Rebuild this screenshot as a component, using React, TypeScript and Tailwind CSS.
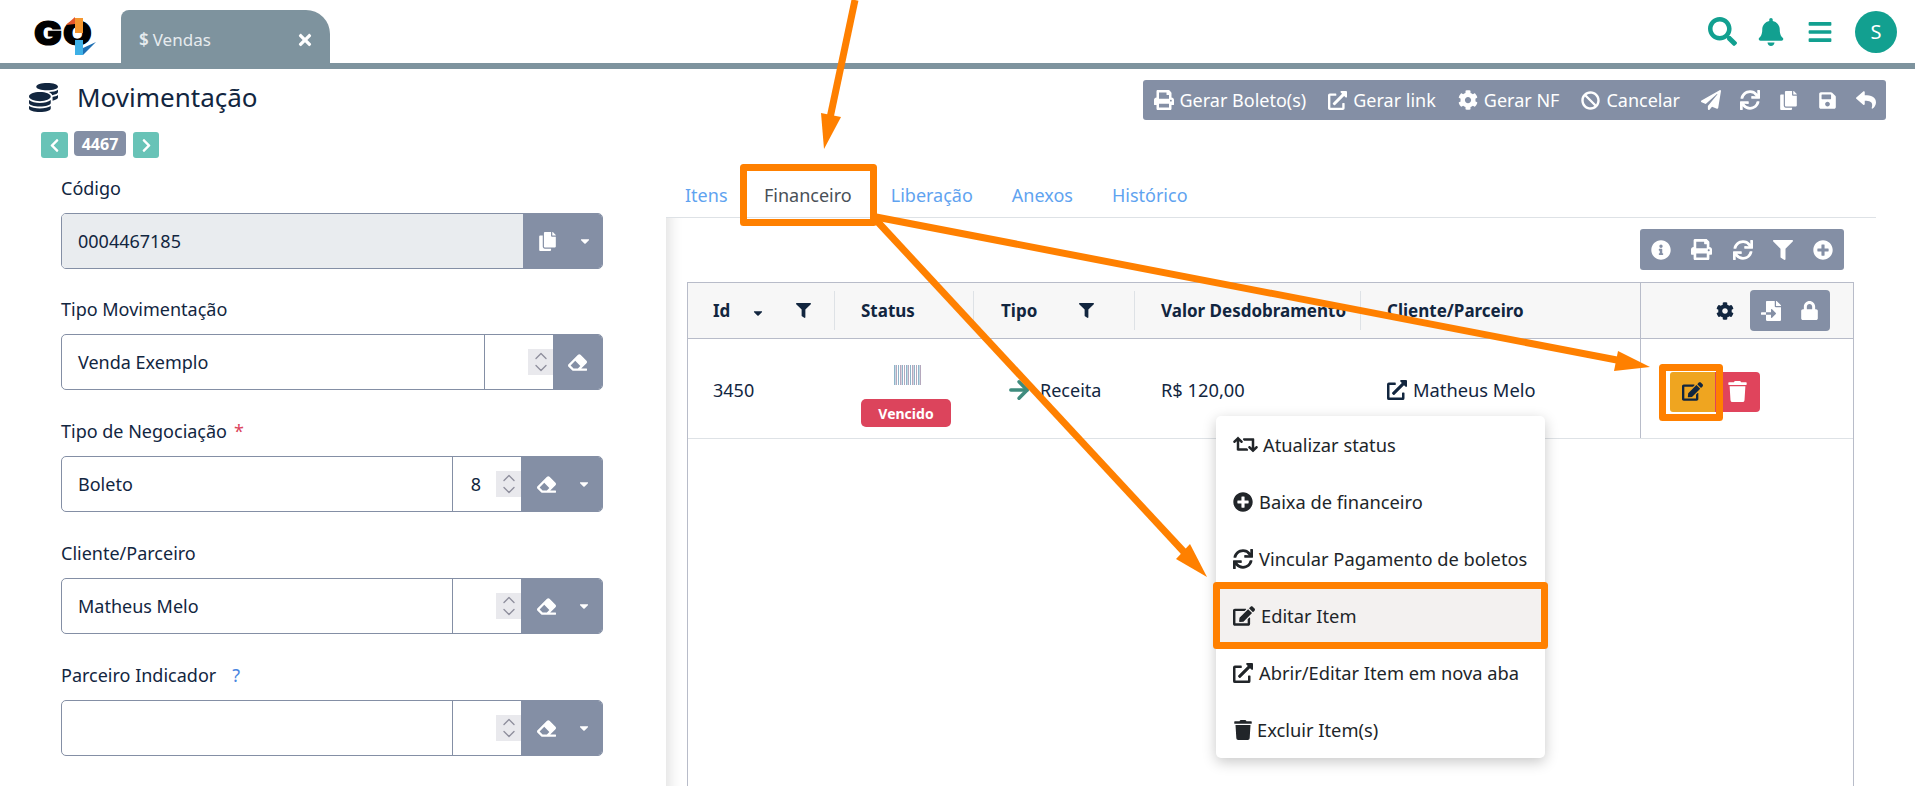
import React from "react";
import {
  FaBan,
  FaBars,
  FaBell,
  FaCaretDown,
  FaChevronLeft,
  FaChevronRight,
  FaCoins,
  FaCog,
  FaCopy,
  FaEdit,
  FaEraser,
  FaExternalLinkAlt,
  FaFileImport,
  FaFilter,
  FaInfoCircle,
  FaLock,
  FaPaperPlane,
  FaPlusCircle,
  FaPrint,
  FaReply,
  FaRetweet,
  FaSave,
  FaSearch,
  FaSync,
  FaTimes,
  FaTrash,
} from "react-icons/fa";
import { ArrowRight, ChevronDown, ChevronUp } from "lucide-react";

// Logo: real letters with the two arrows drawn over the O
function Logo() {
  return (
    <div className="relative ml-[34px] h-[63px] w-[87px] shrink-0">
      <span className="absolute left-0 top-[13px] origin-left scale-x-[1.12] font-['Inter',sans-serif] text-[33px] font-black leading-[40px] tracking-[1px] text-black [-webkit-text-stroke:1.2px_black]">
        GO
      </span>
      <svg className="absolute left-0 top-0" width="87" height="63" viewBox="0 0 87 63">
        <path d="M41 18h8v15h-8z" fill="#f5972f" />
        <path d="M41 17 32 25l9-1z" fill="#e4562a" />
        <path d="M41 40h8v15h-8z" fill="#3db0e6" />
        <path d="M49 55 62 42l-13 6z" fill="#1d6fb3" />
      </svg>
    </div>
  );
}

function Spinner() {
  return (
    <div className="flex h-[26px] w-[25px] flex-col items-center justify-center bg-[#e9e9ed] text-[#8f8f9d]">
      <ChevronUp size={20} strokeWidth={1.6} className="-my-[4px]" />
      <ChevronDown size={20} strokeWidth={1.6} className="-my-[4px]" />
    </div>
  );
}

interface FieldProps {
  label: React.ReactNode;
  value: string;
  code?: string;
  narrow?: boolean;
}

function Field({ label, value, code = "", narrow = false }: FieldProps) {
  return (
    <div className="mb-[25px] last:mb-0">
      <div className="mb-[8px] h-[33px] text-[18px] leading-[33px] text-[#12263f]">{label}</div>
      <div className="flex h-[56px] overflow-hidden rounded-[5px] border border-[#848fa5]">
        <div className={`flex items-center border-r border-[#848fa5] pl-[16px] text-[18px] text-[#12263f] ${narrow ? "w-[423px]" : "w-[391px]"}`}>
          {value}
        </div>
        <div className="flex flex-1 items-center justify-end text-[18px] text-[#12263f]">
          <span className="mr-[15px]">{code}</span>
          <Spinner />
        </div>
        <div className={`flex items-center bg-[#848fa5] text-white ${narrow ? "w-[49px] justify-center" : "w-[81px] pl-[16px]"}`}>
          <FaEraser size={19} />
          {!narrow && <FaCaretDown size={14} className="ml-[21px]" />}
        </div>
      </div>
    </div>
  );
}

function ToolbarItem({ icon, text, gap }: { icon: React.ReactNode; text: string; gap: string }) {
  return (
    <span className={`flex items-center ${gap}`}>
      {icon}
      <span className="ml-[6px]">{text}</span>
    </span>
  );
}

const menuItems = [
  { icon: <FaRetweet size={25} />, text: "Atualizar status", gap: "ml-[5px]" },
  { icon: <FaPlusCircle size={20} />, text: "Baixa de financeiro", gap: "ml-[6px]" },
  { icon: <FaSync size={20} />, text: "Vincular Pagamento de boletos", gap: "ml-[6px]" },
  { icon: <FaEdit size={22} />, text: "Editar Item", gap: "ml-[6px]", active: true },
  { icon: <FaExternalLinkAlt size={20} />, text: "Abrir/Editar Item em nova aba", gap: "ml-[6px]" },
  { icon: <FaTrash size={20} />, text: "Excluir Item(s)", gap: "ml-[4px]" },
];

export default function App() {
  return (
    <div className="relative h-[786px] w-[1915px] overflow-hidden bg-white font-['Noto_Sans',sans-serif] text-[#212529]">
      {/* Top bar */}
      <header className="flex h-[69px] items-end border-b-[6px] border-[#7e939e]">
        <Logo />
        <div className="flex h-[53px] w-[209px] items-center rounded-tl-[8px] rounded-tr-[24px] bg-[#7e939e] pl-[18px] pr-[16px] pt-[7px] text-[17px] text-[#e6ebee]">
          <span className="font-semibold">$</span>
          <span className="ml-[4px]">Vendas</span>
          <FaTimes size={18} className="ml-auto text-white" />
        </div>
        <div className="ml-auto flex h-[63px] items-center pr-[18px] text-[#12a090]">
          <FaSearch size={29} />
          <FaBell size={28} className="ml-[20px]" />
          <FaBars size={26} className="ml-[22px]" />
          <div className="ml-[22px] flex h-[42px] w-[42px] items-center justify-center rounded-full bg-[#12a090] text-[20px] text-white">
            S
          </div>
        </div>
      </header>

      {/* Title row */}
      <div className="flex h-[62px] items-start justify-between pr-[29px]">
        <div className="flex items-center pl-[29px] pt-[14px] text-[#12263f]">
          <FaCoins size={29} />
          <h1 className="ml-[19px] text-[26px] leading-[29px]">Movimentação</h1>
        </div>
        <div className="mt-[11px] flex h-[40px] items-center rounded-[3px] bg-[#848fa5] pl-[11px] pr-[10px] text-[18px] text-white">
          <ToolbarItem icon={<FaPrint size={20} />} text="Gerar Boleto(s)" gap="" />
          <ToolbarItem icon={<FaExternalLinkAlt size={19} />} text="Gerar link" gap="ml-[22px]" />
          <ToolbarItem icon={<FaCog size={20} />} text="Gerar NF" gap="ml-[22px]" />
          <ToolbarItem icon={<FaBan size={19} />} text="Cancelar" gap="ml-[22px]" />
          <FaPaperPlane size={20} className="ml-[21px]" />
          <FaSync size={20} className="ml-[19px]" />
          <FaCopy size={19} className="ml-[19px]" />
          <FaSave size={19} className="ml-[20px]" />
          <FaReply size={20} className="ml-[19px]" />
        </div>
      </div>

      <div className="flex">
        {/* Left form */}
        <div className="w-[666px] shrink-0">
          <div className="flex items-start pl-[41px]">
            <div className="mt-[1px] flex h-[26px] w-[27px] items-center justify-center rounded-[3px] bg-[#68c3b7] text-white">
              <FaChevronLeft size={15} />
            </div>
            <div className="ml-[6px] flex h-[25px] w-[52px] items-center justify-center rounded-[4px] bg-[#848fa5] text-[16px] font-bold text-white">
              4467
            </div>
            <div className="ml-[7px] mt-[1px] flex h-[26px] w-[26px] items-center justify-center rounded-[3px] bg-[#68c3b7] text-white">
              <FaChevronRight size={15} />
            </div>
          </div>
          <div className="ml-[61px] mt-[14px] w-[542px]">
            <div className="mb-[8px] h-[33px] text-[18px] leading-[33px] text-[#12263f]">Código</div>
            <div className="mb-[24px] flex h-[56px] overflow-hidden rounded-[5px] border border-[#848fa5]">
              <div className="flex flex-1 items-center bg-[#e9ecef] pl-[16px] text-[18px] text-[#12263f]">0004467185</div>
              <div className="flex w-[79px] items-center bg-[#848fa5] pl-[15px] text-white">
                <FaCopy size={19} />
                <FaCaretDown size={14} className="ml-[21px]" />
              </div>
            </div>
            <Field label="Tipo Movimentação" value="Venda Exemplo" narrow />
            <Field
              label={
                <>
                  Tipo de Negociação<span className="ml-[7px] text-[#dc445c]">*</span>
                </>
              }
              value="Boleto"
              code="8"
            />
            <Field label="Cliente/Parceiro" value="Matheus Melo" />
            <Field
              label={
                <>
                  Parceiro Indicador<span className="ml-[16px] text-[#4a86e0]">?</span>
                </>
              }
              value=""
            />
          </div>
        </div>

        {/* Right panel */}
        <div className="w-[1210px] shrink-0">
          <nav className="flex h-[87px] gap-[39px] border-b border-[#dee2e6] pl-[19px] pt-[49px] text-[18px] leading-[30px] text-[#5fa3f0]">
            <span className="w-[40px] whitespace-nowrap">Itens</span>
            <span className="text-[#495057]">Financeiro</span>
            <span>Liberação</span>
            <span>Anexos</span>
            <span>Histórico</span>
          </nav>
          <div className="h-[600px] pl-[21px] pr-[22px] pt-[11px] shadow-[inset_18px_0_14px_-14px_rgba(0,0,0,0.12)]">
            <div className="flex justify-end pr-[10px]">
              <div className="flex h-[41px] w-[204px] items-center justify-between rounded-[3px] bg-[#848fa5] px-[11px] text-white">
                <FaInfoCircle size={20} />
                <FaPrint size={21} />
                <FaSync size={20} />
                <FaFilter size={20} />
                <FaPlusCircle size={20} />
              </div>
            </div>

            {/* Table */}
            <div className="mt-[12px] h-[600px] border-x border-t border-[#b8bcc9]">
              <div className="flex h-[56px] border-b border-[#b8bcc9] bg-[#f7f7f7] text-[17px] font-bold text-[#12263f]">
                <div className="flex w-[147px] items-center pl-[25px]">
                  <span>Id</span>
                  <FaCaretDown size={14} className="ml-[21px] mt-[5px]" />
                  <FaFilter size={15} className="ml-[31px] -mt-[1px]" />
                  <span className="ml-auto h-[39px] w-px bg-[#dee2e6]" />
                </div>
                <div className="flex w-[139px] items-center pl-[26px]">
                  <span>Status</span>
                  <span className="ml-auto h-[39px] w-px bg-[#dee2e6]" />
                </div>
                <div className="flex w-[161px] items-center pl-[27px]">
                  <span>Tipo</span>
                  <FaFilter size={15} className="ml-[42px] -mt-[1px]" />
                  <span className="ml-auto h-[39px] w-px bg-[#dee2e6]" />
                </div>
                <div className="flex w-[226px] items-center whitespace-nowrap pl-[26px]">
                  <span>Valor Desdobramento</span>
                  <span className="ml-auto h-[39px] w-px shrink-0 bg-[#dee2e6]" />
                </div>
                <div className="flex w-[279px] items-center pl-[26px]">Cliente/Parceiro</div>
                <div className="flex flex-1 items-center border-l border-[#b8bcc9] pl-[75px]">
                  <FaCog size={18} />
                  <div className="ml-[16px] flex h-[41px] w-[80px] items-center justify-between rounded-[4px] bg-[#848fa5] px-[11px] text-white">
                    <FaFileImport size={20} />
                    <FaLock size={19} />
                  </div>
                </div>
              </div>

              <div className="flex h-[100px] border-b border-[#dee2e6] text-[18px] text-[#12263f]">
                <div className="flex w-[147px] items-center pl-[25px] pt-[3px]">3450</div>
                <div className="flex w-[139px] flex-col pl-[26px] pt-[26px]">
                  <div className="flex w-[90px] justify-center pl-[2px]">
                    {/* barcode */}
                    <svg width="27" height="20" viewBox="0 0 27 20">
                      {[0, 2, 4, 6, 8, 10, 12, 14, 16, 18, 20, 22, 24, 26].map((x, i) => (
                        <rect key={x} x={x} width={i % 3 === 0 ? 1.5 : 1} height="20" fill={i % 2 ? "#b5a8bd" : "#8fb4c9"} />
                      ))}
                    </svg>
                  </div>
                  <div className="mt-[14px] flex h-[28px] w-[90px] items-center justify-center rounded-[5px] bg-[#dc445c] text-[14px] font-bold text-white">
                    Vencido
                  </div>
                </div>
                <div className="flex w-[161px] items-center pl-[31px] pt-[3px]">
                  <ArrowRight size={28} strokeWidth={3} className="text-[#3f8c7e]" />
                  <span className="ml-[7px]">Receita</span>
                </div>
                <div className="flex w-[226px] items-center pl-[26px] pt-[3px] text-[18.3px]">R$ 120,00</div>
                <div className="flex w-[279px] items-center pl-[26px] pt-[3px] text-[18.3px]">
                  <FaExternalLinkAlt size={20} />
                  <span className="ml-[6px]">Matheus Melo</span>
                </div>
                <div className="flex flex-1 items-center border-l border-[#b8bcc9] pl-[29px] pt-[6px]">
                  <div className="flex h-[40px] w-[45px] items-center justify-center rounded-l-[3px] bg-[#efa520]">
                    <FaEdit size={21} />
                  </div>
                  <div className="flex h-[40px] w-[45px] items-center justify-center rounded-r-[4px] bg-[#e0445c] text-white">
                    <FaTrash size={21} />
                  </div>
                </div>
              </div>
            </div>
          </div>
        </div>
      </div>

      {/* Row actions menu */}
      <div className="absolute left-[1216px] top-[416px] w-[329px] overflow-hidden rounded-[5px] bg-white text-[18.3px] text-[#212529] shadow-[0_4px_14px_rgba(0,0,0,0.22)]">
        {menuItems.map((item) => (
          <div
            key={item.text}
            className={`flex h-[57px] items-center pl-[17px] ${item.active ? "bg-[#f3f1f0]" : ""}`}
          >
            {item.icon}
            <span className={item.gap}>{item.text}</span>
          </div>
        ))}
      </div>

      {/* Orange annotations drawn over the screenshot */}
      <svg className="pointer-events-none absolute left-0 top-0" width="1915" height="786" viewBox="0 0 1915 786">
        <g fill="none" stroke="#ff8000" strokeWidth="7" strokeLinejoin="round">
          <rect x="743.5" y="167.5" width="130" height="55" />
          <rect x="1662.5" y="367.5" width="57" height="50" />
          <rect x="1216.5" y="585.5" width="328" height="60" />
          <path d="M855 0 830 118" />
          <path d="M876 217 1622 361" />
          <path d="M876 220 1184 552" />
        </g>
        <g fill="#ff8000">
          <path d="M821 113 841 117 824 149z" />
          <path d="M1618 351 1650 367 1614 371z" />
          <path d="M1190 544 1207 577 1176 559z" />
        </g>
      </svg>
    </div>
  );
}
